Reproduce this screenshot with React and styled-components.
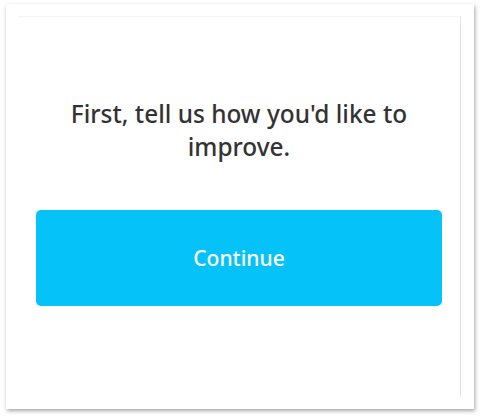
import React from "react";
import styled, { createGlobalStyle } from "styled-components";

const GlobalStyle = createGlobalStyle`
  html, body {
    margin: 0;
    background: #ffffff;
  }
  body {
    font-family: "Noto Sans", "DejaVu Sans", sans-serif;
  }
`;

export default function App() {
  return (
    <>
      <GlobalStyle />
      <Page>
        <Card>
          {/* Inner panel with faint top and right rules */}
          <Panel>
            <Heading>First, tell us how you'd like to improve.</Heading>
            <Button type="button">Continue</Button>
          </Panel>
        </Card>
      </Page>
    </>
  );
}

const Page = styled.div`
  padding: 4px 6px 9px 6px;
`;

const Card = styled.div`
  width: 468px;
  height: 405px;
  box-sizing: border-box;
  padding: 12px 13px 12px 12px;
  background: #ffffff;
  box-shadow: 1px 2px 4px rgba(0, 0, 0, 0.35);
  display: flex;
`;

const Panel = styled.div`
  flex: 1;
  display: flex;
  flex-direction: column;
  padding: 80px 18px 0 18px;
  border-top: 1px solid #f4f4f4;
  border-right: 1px solid #e2e2e2;
`;

const Heading = styled.h1`
  margin: 0 10px;
  font-size: 24.4px;
  font-weight: 500;
  line-height: 33px;
  color: #333333;
  text-align: center;
`;

const Button = styled.button`
  margin-top: 47px;
  height: 96px;
  border: none;
  border-radius: 5px;
  background: #05c3f9;
  color: #ffffff;
  font-family: "Noto Sans", "DejaVu Sans", sans-serif;
  font-size: 21px;
  font-weight: 500;
  cursor: pointer;
`;
